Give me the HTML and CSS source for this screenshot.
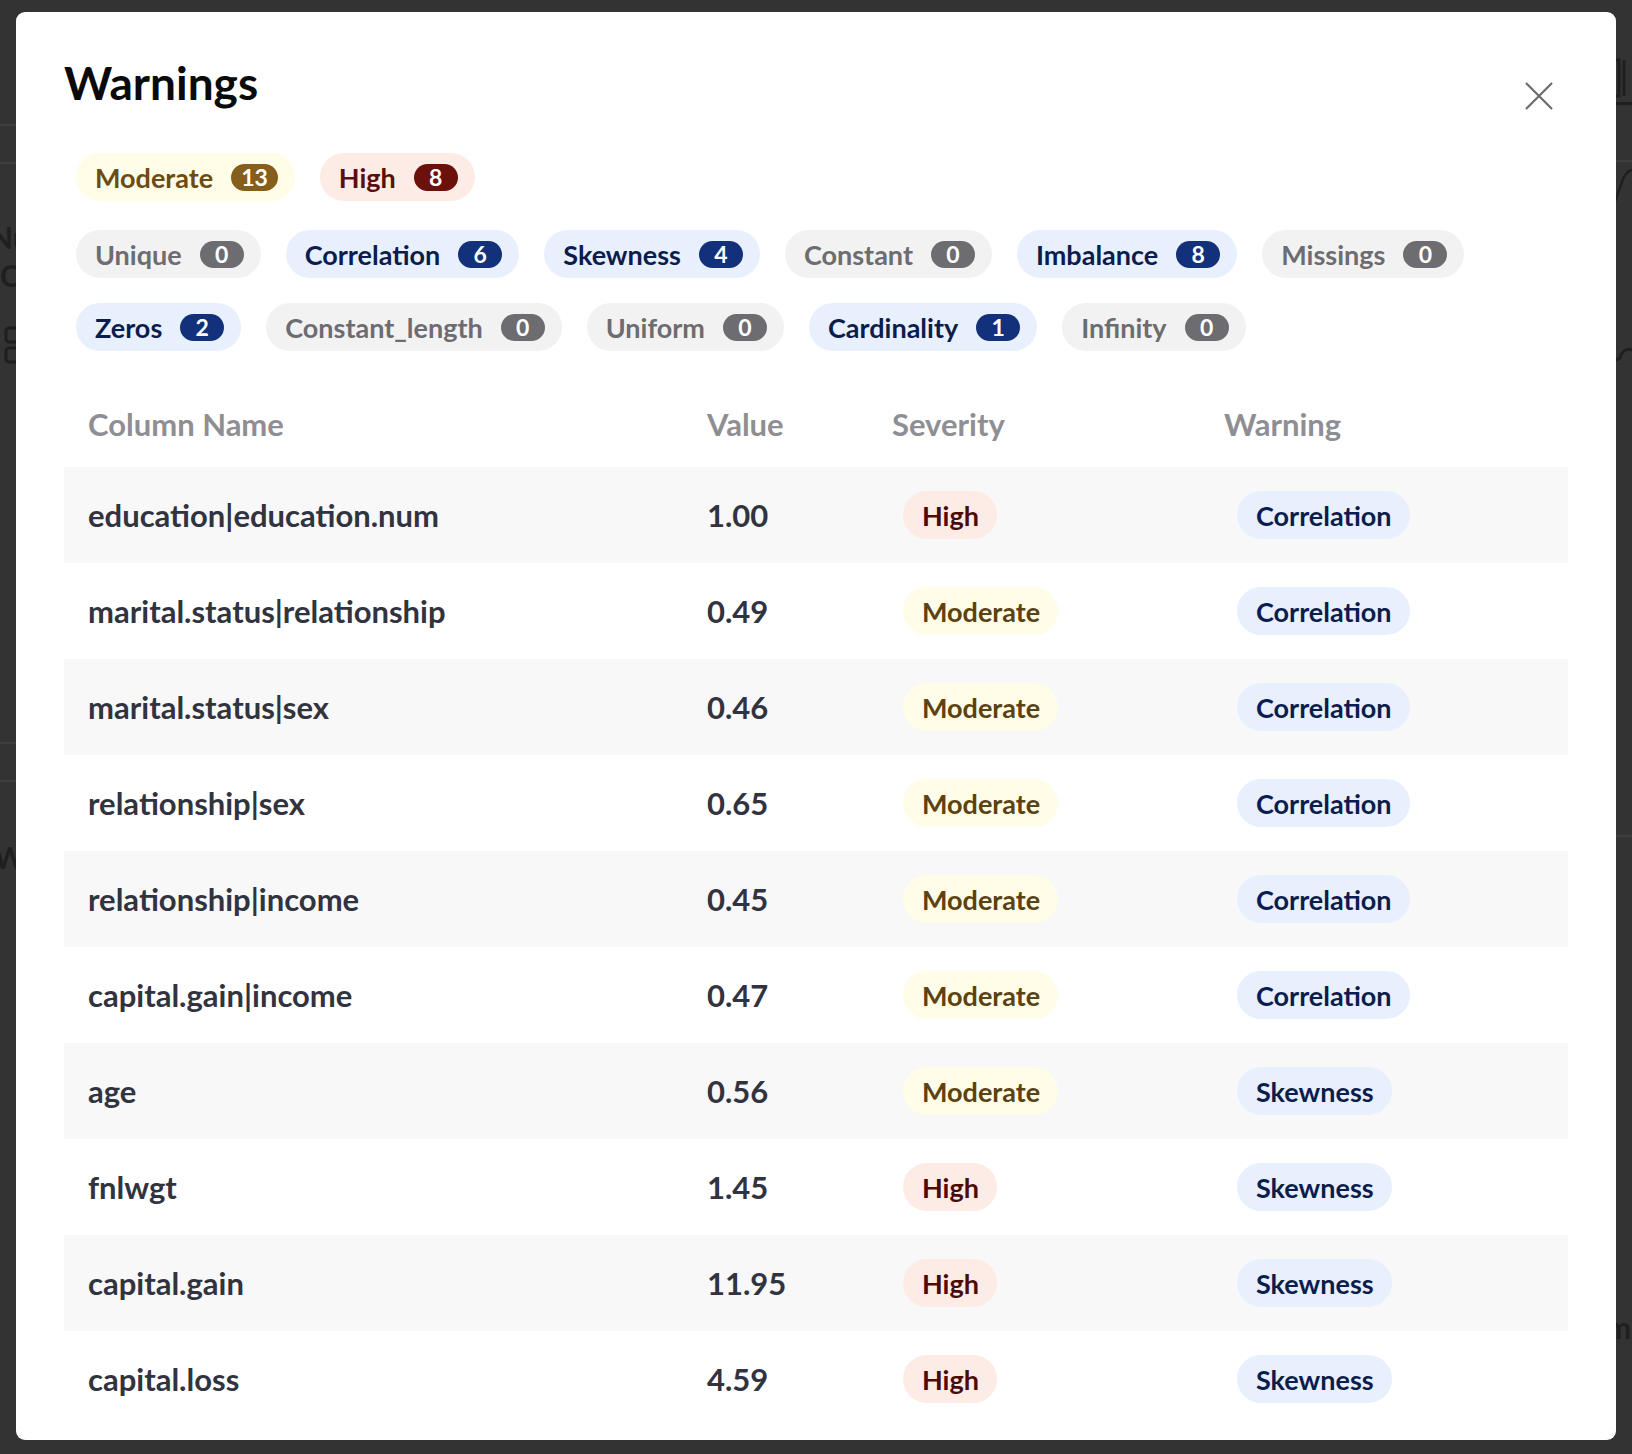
FILE: index.html
```html
<!DOCTYPE html>
<html lang="en">
<head>
<meta charset="utf-8">
<title>Warnings</title>
<link rel="stylesheet" href="styles.css">
</head>
<body>
<div class="backdrop">
  <div class="bg-line l1"></div>
  <div class="bg-line l2"></div>
  <div class="bg-line l3"></div>
  <div class="bg-line l4"></div>
  <div class="bg-line r1"></div>
  <div class="bg-line r2"></div>
  <div class="bg-line r3"></div>
  <div class="bg-text t1">Nu</div>
  <div class="bg-text t2">C</div>
  <div class="bg-text t3">W</div>
  <div class="bg-text t4">m</div>
  <svg class="bg-icon i1" width="20" height="40" viewBox="0 0 20 40"><rect x="6" y="2" width="14" height="14" rx="3" fill="none" stroke="#1f1f1f" stroke-width="3"/><rect x="6" y="22" width="14" height="14" rx="3" fill="none" stroke="#1f1f1f" stroke-width="3"/></svg>
  <svg class="bg-icon i2" width="20" height="44" viewBox="0 0 20 44"><path d="M0 4 H7 V40 H0" fill="none" stroke="#1f1f1f" stroke-width="3"/><path d="M12 4 V40" stroke="#1f1f1f" stroke-width="3"/></svg>
  <svg class="bg-icon i3" width="20" height="60" viewBox="0 0 20 60"><path d="M0 44 C6 44 8 12 20 10" fill="none" stroke="#1f1f1f" stroke-width="2.5"/></svg>
  <svg class="bg-icon i4" width="20" height="30" viewBox="0 0 20 30"><path d="M0 22 L8 18 C10 10 16 8 20 10" fill="none" stroke="#1f1f1f" stroke-width="3"/></svg>
</div>

<div class="modal">
  <div class="modal-head">
    <h1 class="title">Warnings</h1>
    <button class="close" aria-label="Close">
      <svg width="30" height="30" viewBox="0 0 30 30"><path d="M2 2 L28 28 M28 2 L2 28" stroke="#6b6b70" stroke-width="2.2" fill="none"/></svg>
    </button>
  </div>

  <div class="filters">
    <div class="filter-row sev-row">
      <span class="tag tag-mod">Moderate<span class="badge b-mod">13</span></span>
      <span class="tag tag-high">High<span class="badge b-high">8</span></span>
    </div>
    <div class="filter-row">
      <span class="tag tag-gray">Unique<span class="badge b-gray">0</span></span>
      <span class="tag tag-blue">Correlation<span class="badge b-blue">6</span></span>
      <span class="tag tag-blue">Skewness<span class="badge b-blue">4</span></span>
      <span class="tag tag-gray">Constant<span class="badge b-gray">0</span></span>
      <span class="tag tag-blue">Imbalance<span class="badge b-blue">8</span></span>
      <span class="tag tag-gray">Missings<span class="badge b-gray">0</span></span>
    </div>
    <div class="filter-row">
      <span class="tag tag-blue">Zeros<span class="badge b-blue">2</span></span>
      <span class="tag tag-gray">Constant_length<span class="badge b-gray">0</span></span>
      <span class="tag tag-gray">Uniform<span class="badge b-gray">0</span></span>
      <span class="tag tag-blue">Cardinality<span class="badge b-blue">1</span></span>
      <span class="tag tag-gray">Infinity<span class="badge b-gray">0</span></span>
    </div>
  </div>

  <div class="table">
    <div class="trow thead">
      <div class="cell">Column Name</div>
      <div class="cell">Value</div>
      <div class="cell">Severity</div>
      <div class="cell">Warning</div>
    </div>
    <div class="trow shade">
      <div class="cell">education|education.num</div>
      <div class="cell">1.00</div>
      <div class="cell"><span class="pill p-high">High</span></div>
      <div class="cell"><span class="pill p-blue">Correlation</span></div>
    </div>
    <div class="trow">
      <div class="cell">marital.status|relationship</div>
      <div class="cell">0.49</div>
      <div class="cell"><span class="pill p-mod">Moderate</span></div>
      <div class="cell"><span class="pill p-blue">Correlation</span></div>
    </div>
    <div class="trow shade">
      <div class="cell">marital.status|sex</div>
      <div class="cell">0.46</div>
      <div class="cell"><span class="pill p-mod">Moderate</span></div>
      <div class="cell"><span class="pill p-blue">Correlation</span></div>
    </div>
    <div class="trow">
      <div class="cell">relationship|sex</div>
      <div class="cell">0.65</div>
      <div class="cell"><span class="pill p-mod">Moderate</span></div>
      <div class="cell"><span class="pill p-blue">Correlation</span></div>
    </div>
    <div class="trow shade">
      <div class="cell">relationship|income</div>
      <div class="cell">0.45</div>
      <div class="cell"><span class="pill p-mod">Moderate</span></div>
      <div class="cell"><span class="pill p-blue">Correlation</span></div>
    </div>
    <div class="trow">
      <div class="cell">capital.gain|income</div>
      <div class="cell">0.47</div>
      <div class="cell"><span class="pill p-mod">Moderate</span></div>
      <div class="cell"><span class="pill p-blue">Correlation</span></div>
    </div>
    <div class="trow shade">
      <div class="cell">age</div>
      <div class="cell">0.56</div>
      <div class="cell"><span class="pill p-mod">Moderate</span></div>
      <div class="cell"><span class="pill p-blue">Skewness</span></div>
    </div>
    <div class="trow">
      <div class="cell">fnlwgt</div>
      <div class="cell">1.45</div>
      <div class="cell"><span class="pill p-high">High</span></div>
      <div class="cell"><span class="pill p-blue">Skewness</span></div>
    </div>
    <div class="trow shade">
      <div class="cell">capital.gain</div>
      <div class="cell">11.95</div>
      <div class="cell"><span class="pill p-high">High</span></div>
      <div class="cell"><span class="pill p-blue">Skewness</span></div>
    </div>
    <div class="trow">
      <div class="cell">capital.loss</div>
      <div class="cell">4.59</div>
      <div class="cell"><span class="pill p-high">High</span></div>
      <div class="cell"><span class="pill p-blue">Skewness</span></div>
    </div>
  </div>
</div>
</body>
</html>
```

FILE: styles.css
```css
* { box-sizing: border-box; }

html, body {
  margin: 0;
  padding: 0;
  width: 1632px;
  height: 1454px;
  overflow: hidden;
  background: #333333;
  font-family: "Lato", "Noto Sans", "DejaVu Sans", sans-serif;
}

.backdrop {
  position: absolute;
  inset: 0;
}

.bg-line {
  position: absolute;
  height: 2px;
  background: #3e3e3e;
}
.l1 { left: 0; width: 20px; top: 124px; }
.l2 { left: 0; width: 20px; top: 162px; }
.l3 { left: 0; width: 20px; top: 742px; }
.l4 { left: 0; width: 20px; top: 780px; }
.r1 { left: 1610px; width: 22px; top: 102px; background: #1f1f1f; height: 3px; }
.r2 { left: 1610px; width: 22px; top: 160px; }
.r3 { left: 1610px; width: 22px; top: 835px; }

.bg-text {
  position: absolute;
  color: #1f1f1f;
  font-size: 30px;
  font-weight: 700;
  line-height: 1;
}
.t1 { left: -10px; top: 222px; }
.t2 { left: 0; top: 260px; }
.t3 { left: -6px; top: 842px; }
.t4 { left: 1606px; top: 1312px; }

.bg-icon { position: absolute; }
.i1 { left: 0; top: 326px; }
.i2 { left: 1612px; top: 56px; }
.i3 { left: 1612px; top: 160px; }
.i4 { left: 1612px; top: 340px; }

.modal {
  position: absolute;
  left: 16px;
  top: 12px;
  width: 1600px;
  height: 1428px;
  background: #ffffff;
  border-radius: 9px;
  padding: 0 48px;
  overflow: hidden;
}

.modal-head {
  display: flex;
  justify-content: space-between;
  align-items: center;
  padding-top: 43px;
}

.title {
  margin: 0;
  font-size: 46px;
  line-height: 56px;
  font-weight: 700;
  color: #0a0a0a;
}

.close {
  border: 0;
  background: none;
  padding: 0;
  margin: 25px 14px 0 0;
  width: 30px;
  height: 30px;
  display: flex;
}

.filters {
  padding-left: 12px;
  margin-top: 42px;
  display: flex;
  flex-direction: column;
  gap: 25px;
}

.sev-row { margin-bottom: 4px; }

.filter-row {
  display: flex;
  gap: 25px;
}

.tag {
  display: inline-flex;
  align-items: center;
  height: 48px;
  padding: 0 17px 0 19px;
  border-radius: 24px;
  font-size: 27px;
  font-weight: 700;
  gap: 18px;
  white-space: nowrap;
}

.badge {
  display: inline-flex;
  align-items: center;
  justify-content: center;
  min-width: 44px;
  height: 27px;
  padding: 0 10px;
  border-radius: 14px;
  font-size: 23px;
  font-weight: 700;
  color: #ffffff;
}

.tag-mod { background: #fffde8; color: #6b4c12; }
.b-mod { background: #855e1c; }
.tag-high { background: #fdece6; color: #5a0e0e; }
.b-high { background: #6c100c; }
.tag-gray { background: #f2f2f2; color: #6c6c71; }
.b-gray { background: #6c6c71; }
.tag-blue { background: #e8f0fd; color: #0c1d4d; }
.b-blue { background: #12317a; }

.table {
  margin-top: 30px;
}

.trow {
  display: grid;
  grid-template-columns: 619px 185px 332px 1fr;
  height: 96px;
  align-items: center;
}

.thead {
  height: 86px;
}

.shade { background: #f8f8f8; }

.cell {
  padding-left: 24px;
  font-size: 31px;
  font-weight: 700;
  color: #31333f;
  white-space: nowrap;
}

.thead .cell {
  color: #8e8e93;
}

.pill {
  display: inline-flex;
  align-items: center;
  height: 48px;
  padding: 0 18px 0 19px;
  margin-left: 11px;
  border-radius: 24px;
  font-size: 27px;
  font-weight: 700;
}

.cell:last-child .pill { margin-left: 13px; }

.p-high { background: #fdece6; color: #4a0b0b; }
.p-mod { background: #fffde8; color: #5a4213; }
.p-blue { background: #e8f0fd; color: #0c1d4d; }
```
